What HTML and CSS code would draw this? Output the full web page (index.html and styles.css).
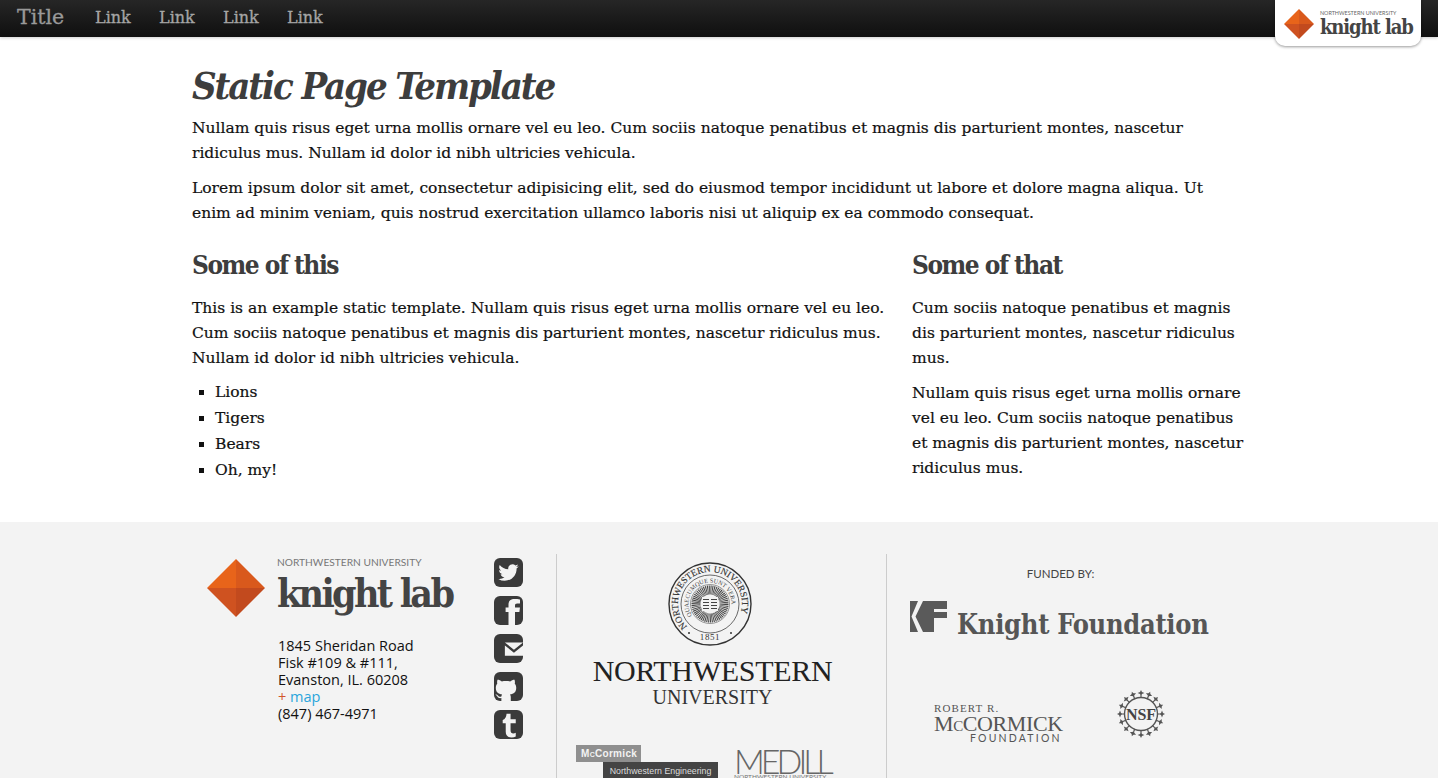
FILE: index.html
```html
<!DOCTYPE html>
<html lang="en">
<head>
  <meta charset="UTF-8">
  <meta name="viewport" content="width=device-width, initial-scale=1.0">
  <title>Static Page Template</title>
  <link rel="stylesheet" href="styles.css">
</head>
<body>
  <header class="topbar">
    <a class="brand" href="#">Title</a>
    <nav class="nav">
      <a href="#">Link</a>
      <a href="#">Link</a>
      <a href="#">Link</a>
      <a href="#">Link</a>
    </nav>
    <a class="badge" href="#">
      <svg class="diamond-sm" viewBox="0 0 58 58"><use href="#diamond"/></svg>
      <span class="badge-text">
        <span class="badge-nu">NORTHWESTERN UNIVERSITY</span>
        <span class="badge-kl">knight lab</span>
      </span>
    </a>
  </header>

  <main class="container">
    <h1>Static Page Template</h1>
    <p class="intro">Nullam quis risus eget urna mollis ornare vel eu leo. Cum sociis natoque penatibus et magnis dis parturient montes, nascetur ridiculus mus. Nullam id dolor id nibh ultricies vehicula.</p>
    <p class="intro">Lorem ipsum dolor sit amet, consectetur adipisicing elit, sed do eiusmod tempor incididunt ut labore et dolore magna aliqua. Ut enim ad minim veniam, quis nostrud exercitation ullamco laboris nisi ut aliquip ex ea commodo consequat.</p>
    <div class="columns">
      <section>
        <h2>Some of this</h2>
        <p>This is an example static template. Nullam quis risus eget urna mollis ornare vel eu leo. Cum sociis natoque penatibus et magnis dis parturient montes, nascetur ridiculus mus. Nullam id dolor id nibh ultricies vehicula.</p>
        <ul>
          <li>Lions</li>
          <li>Tigers</li>
          <li>Bears</li>
          <li>Oh, my!</li>
        </ul>
      </section>
      <section>
        <h2>Some of that</h2>
        <p>Cum sociis natoque penatibus et magnis dis parturient montes, nascetur ridiculus mus.</p>
        <p>Nullam quis risus eget urna mollis ornare vel eu leo. Cum sociis natoque penatibus et magnis dis parturient montes, nascetur ridiculus mus.</p>
      </section>
    </div>
  </main>

  <footer class="footer">
    <div class="footer-inner">
      <div class="f-lab">
        <div class="lab-info">
          <div class="lab-logo">
            <svg class="diamond-lg" viewBox="0 0 58 58">
              <defs>
                <g id="diamond">
                  <polygon points="29,0 58,29 29,29" fill="#d9591c"/>
                  <polygon points="29,0 0,29 29,29" fill="#e8641a"/>
                  <polygon points="0,29 29,58 29,29" fill="#cf5220"/>
                  <polygon points="58,29 29,58 29,29" fill="#c24a1e"/>
                </g>
              </defs>
              <use href="#diamond"/>
            </svg>
            <div class="lab-name">
              <span class="lab-nu">NORTHWESTERN UNIVERSITY</span>
              <span class="lab-kl">knight lab</span>
            </div>
          </div>
          <address class="address">
            1845 Sheridan Road<br>
            Fisk #109 &amp; #111,<br>
            Evanston, IL. 60208<br>
            <span class="plus">+</span> <a href="#">map</a><br>
            (847) 467-4971
          </address>
        </div>
        <div class="social">
          <a href="#" aria-label="Twitter"><svg viewBox="0 0 24 24"><path transform="translate(3.6 3.6) scale(.7)" d="M23.953 4.57a10 10 0 01-2.825.775 4.958 4.958 0 002.163-2.723c-.951.555-2.005.959-3.127 1.184a4.92 4.92 0 00-8.384 4.482C7.69 8.095 4.067 6.13 1.64 3.162a4.822 4.822 0 00-.666 2.475c0 1.71.87 3.213 2.188 4.096a4.904 4.904 0 01-2.228-.616v.06a4.923 4.923 0 003.946 4.827 4.996 4.996 0 01-2.212.085 4.936 4.936 0 004.604 3.417 9.867 9.867 0 01-6.102 2.105c-.39 0-.779-.023-1.17-.067a13.995 13.995 0 007.557 2.209c9.053 0 13.998-7.496 13.998-13.985 0-.21 0-.42-.015-.63A9.935 9.935 0 0024 4.59z"/></svg></a>
          <a href="#" aria-label="Facebook"><svg viewBox="0 0 24 24"><path d="M12 24V13.300H9.600V9.500H12V7C12 3.900 14 2.500 17 2.500c1.500 0 3 .1 4.500.3v3.500h-2.300c-1.400 0-1.800.6-1.800 1.700v1.500H21.500l-.5 3.800h-3.600V24z"/></svg></a>
          <a href="#" aria-label="Email"><svg viewBox="0 0 24 24"><path d="M9 7H24L16.500 13zM9 9.500l7.500 6 7.500-6V18H9z"/></svg></a>
          <a href="#" aria-label="GitHub"><svg viewBox="0 0 24 24"><path d="M6.100 24v-2.400c-1.700.3-2.700-.3-3.300-1.300-.4-.8-.9-1.200-1.600-1.500.6-.3 1.600 0 2.200.9.6.9 1.500 1.100 2.700.6.100-.7.300-1.200.7-1.600-3.400-.4-5.300-2-5.300-5.600 0-1.400.4-2.500 1.200-3.400-.2-.9-.2-2 .2-3.200 1.100-.1 2.300.4 3.600 1.300 1.700-.4 5.200-.4 6.900 0 1.300-.9 2.500-1.400 3.600-1.300.4 1.200.4 2.300.2 3.200.8.900 1.200 2 1.200 3.400 0 3.600-1.900 5.200-5.300 5.600.5.500.8 1.200.8 2.300V24z"/></svg></a>
          <a href="#" aria-label="Tumblr"><svg viewBox="0 0 24 24"><path d="M10.400 3h3.300v4.600h4.300v3.400h-4.300v5.700c0 1.800.8 2.700 2.300 2.700.7 0 1.400-.2 2-.6V22c-.9.5-2.100.8-3.400.8-3 0-4.900-1.700-4.900-4.800V11H7.200V8.300C9.200 7.600 10.200 5.600 10.400 3z"/></svg></a>
        </div>
      </div>

      <div class="f-nu">
        <svg class="seal" viewBox="0 0 84 84">
          <defs>
            <path id="seal-ring" d="M42 42m-32 0a32 32 0 1 1 64 0a32 32 0 1 1-64 0"/>
            <path id="seal-inner" d="M42 42m-21.500 0a21.500 21.500 0 1 1 43 0a21.500 21.500 0 1 1-43 0"/>
          </defs>
          <circle cx="42" cy="42" r="41" fill="none" stroke="#333" stroke-width="1.400"/>
          <circle cx="42" cy="42" r="29" fill="none" stroke="#444" stroke-width=".8"/>
          <circle cx="42" cy="42" r="19.500" fill="none" stroke="#555" stroke-width=".6"/>
          <circle cx="42" cy="42" r="14" fill="none" stroke="#444" stroke-width="9" stroke-dasharray=".9 .6"/>
          <rect x="34" y="35" width="16" height="14" fill="#f3f3f3"/>
          <path d="M35 37.500h6M43 37.500h6M35 40.500h6M43 40.500h6M35 43.500h6M43 43.500h6M35 46.500h6M43 46.500h6" stroke="#444" stroke-width="1.200"/>
          <text class="seal-text" transform="rotate(-45 42 42)"><textPath href="#seal-ring">NORTHWESTERN UNIVERSITY</textPath></text>
          <text class="seal-small" transform="rotate(-33 42 42)"><textPath href="#seal-inner">QUAECUMQUE SUNT VERA</textPath></text>
          <text class="seal-year" x="42" y="78" text-anchor="middle">1851</text>
          <circle cx="21" cy="71" r="1" fill="#333"/>
          <circle cx="63" cy="71" r="1" fill="#333"/>
        </svg>
        <div class="nu-name">NORTHWESTERN</div>
        <div class="nu-sub">UNIVERSITY</div>
        <div class="schools">
          <div class="mccormick">
            <span class="mc-top">M<small>C</small>Cormick</span>
            <span class="mc-bottom">Northwestern Engineering</span>
          </div>
          <div class="medill">
            <span class="medill-name">MEDILL</span>
            <span class="medill-sub">NORTHWESTERN UNIVERSITY</span>
          </div>
        </div>
      </div>

      <div class="f-funders">
        <div class="funded">FUNDED BY:</div>
        <div class="kf">
          <svg class="kf-mark" viewBox="0 0 38 31"><path d="M0 0H8L1.500 15.500 8 31H0ZM13 0H37V8H24V11H37V17H24V31H13L5.500 15.500Z"/></svg>
          <span class="kf-name">Knight Foundation</span>
        </div>
        <div class="funder-row">
          <div class="rrm">
            <span class="rrm-a">ROBERT R.</span>
            <span class="rrm-b">M<small>C</small>CORMICK</span>
            <span class="rrm-c">FOUNDATION</span>
          </div>
          <svg class="nsf" viewBox="0 0 48 48">
            <defs>
              <path id="nsf-star" d="M24 0l1 2 2.400 1-2.400 1-1 2.200-1-2.200-2.400-1 2.400-1zM23.400 5h1.200v3h-1.200z"/>
            </defs>
            <circle cx="24" cy="24" r="16.500" fill="none" stroke="#555" stroke-width="1.400"/>
            <use href="#nsf-star"/>
            <use href="#nsf-star" transform="rotate(22.5 24 24)"/>
            <use href="#nsf-star" transform="rotate(45 24 24)"/>
            <use href="#nsf-star" transform="rotate(67.5 24 24)"/>
            <use href="#nsf-star" transform="rotate(90 24 24)"/>
            <use href="#nsf-star" transform="rotate(112.5 24 24)"/>
            <use href="#nsf-star" transform="rotate(135 24 24)"/>
            <use href="#nsf-star" transform="rotate(157.5 24 24)"/>
            <use href="#nsf-star" transform="rotate(180 24 24)"/>
            <use href="#nsf-star" transform="rotate(202.5 24 24)"/>
            <use href="#nsf-star" transform="rotate(225 24 24)"/>
            <use href="#nsf-star" transform="rotate(247.5 24 24)"/>
            <use href="#nsf-star" transform="rotate(270 24 24)"/>
            <use href="#nsf-star" transform="rotate(292.5 24 24)"/>
            <use href="#nsf-star" transform="rotate(315 24 24)"/>
            <use href="#nsf-star" transform="rotate(337.5 24 24)"/>
            <text x="24" y="29.500" text-anchor="middle" class="nsf-text">NSF</text>
          </svg>
        </div>
      </div>
    </div>
  </footer>
</body>
</html>
```

FILE: styles.css
```css
* { box-sizing: border-box; }
body {
  margin: 0;
  background: #fff;
  color: #111;
  font-family: "DejaVu Serif", serif;
  font-size: 15.5px;
  line-height: 25px;
}
a { text-decoration: none; }

.topbar {
  position: relative;
  display: flex;
  align-items: center;
  height: 37px;
  padding: 0 0 3px 17px;
  background: linear-gradient(#262626, #0f0f0f);
  box-shadow: 0 1px 3px rgba(0,0,0,.2);
}
.brand {
  width: 78px;
  color: #999;
  font-size: 20.5px;
  -webkit-text-stroke: .3px #999;
}
.nav { display: flex; gap: 26px; }
.nav a {
  width: 38px;
  color: #a5a5a5;
  font-size: 16px;
  -webkit-text-stroke: .3px #a5a5a5;
}
.badge {
  position: absolute;
  top: 0;
  left: 1275px;
  display: flex;
  gap: 6px;
  align-items: center;
  width: 146px;
  height: 46px;
  padding: 2px 0 0 9px;
  background: #fff;
  border-radius: 0 0 10px 10px;
  box-shadow: 0 1px 3px rgba(0,0,0,.4);
}
.diamond-sm { width: 30px; height: 30px; }
.badge-text { display: flex; flex-direction: column; white-space: nowrap; }
.badge-nu {
  color: #666;
  font: 5.400px/7px "Lato", sans-serif;
}
.badge-kl {
  color: #444;
  font: bold 20px/21px "DejaVu Serif Condensed", "DejaVu Serif", serif;
  font-stretch: condensed;
  letter-spacing: -1.100px;
}

.container {
  width: 1054px;
  height: 485px;
  margin: 0 auto;
  padding-top: 23px;
}
h1, h2 {
  margin: 0;
  color: #3d3d3d;
  font-family: "DejaVu Serif Condensed", "DejaVu Serif", serif;
  font-stretch: condensed;
  font-weight: bold;
}
h1 {
  font-size: 38px;
  font-style: italic;
  line-height: 52px;
  letter-spacing: -2.100px;
  margin-bottom: 4px;
}
h2 {
  font-size: 26px;
  line-height: 40px;
  letter-spacing: -1.500px;
  margin-bottom: 11px;
}
p {
  margin: 0 0 10px;
  -webkit-text-stroke: .2px #111;
}
.intro { max-width: 1030px; }
.columns {
  display: grid;
  grid-template-columns: 700px 334px;
  column-gap: 20px;
  margin-top: 19px;
}
ul {
  margin: -2px 0 0;
  padding-left: 23px;
  list-style: square;
  -webkit-text-stroke: .2px #111;
}
li { line-height: 26px; }

.footer {
  height: 256px;
  overflow: hidden;
  background: #f3f3f3;
}
.footer-inner {
  display: grid;
  grid-template-columns: 364px 330px 360px;
  width: 1054px;
  height: 100%;
  margin: 0 auto;
  padding-top: 32px;
}
.f-lab {
  display: flex;
  justify-content: space-between;
  padding: 4px 33px 0 15px;
}
.lab-logo { display: flex; gap: 12px; }
.diamond-lg { width: 58px; height: 58px; margin-top: 1px; }
.lab-name { display: flex; flex-direction: column; }
.lab-nu {
  color: #777;
  font: 10.200px/12px "Lato", sans-serif;
  margin-top: -2px;
}
.lab-kl {
  margin-top: 3px;
  color: #444;
  font: bold 39px/44px "DejaVu Serif Condensed", "DejaVu Serif", serif;
  font-stretch: condensed;
  letter-spacing: -2.700px;
}
.address {
  margin: 20px 0 0 71px;
  color: #111;
  font: normal 14.500px/17px "Open Sans", sans-serif;
}
.plus { color: #d2552a; }
.address a { color: #2aa5dc; }
.social { display: flex; flex-direction: column; gap: 9px; }
.social a {
  display: block;
  width: 29px;
  height: 29px;
  overflow: hidden;
  background: #3a3a3a;
  border-radius: 6px;
}
.social svg { display: block; width: 29px; height: 29px; fill: #f3f3f3; }

.f-nu {
  border-left: 1px solid #ccc;
  padding: 8px 18px 0 0;
  text-align: center;
}
.seal { display: block; width: 84px; height: 84px; margin-left: 111px; }
.seal-text { font: 9.400px "Liberation Serif", serif; fill: #333; stroke: #333; stroke-width: .15px; }
.seal-small { font: 6.200px "Liberation Serif", serif; fill: #444; }
.seal-year { font: 9px "Liberation Serif", serif; fill: #333; letter-spacing: .6px; }
.nu-name {
  margin-top: 9px;
  color: #222;
  font: 30px/31px "Liberation Serif", serif;
  letter-spacing: -.3px;
}
.nu-sub {
  color: #333;
  font: 20px/22px "Liberation Serif", serif;
}
.schools {
  display: flex;
  gap: 16px;
  margin: 37px 0 0 19px;
  text-align: left;
}
.mccormick { display: flex; flex-direction: column; width: 142px; font-family: "Liberation Sans", sans-serif; }
.mc-top {
  width: 65px;
  height: 17px;
  padding-left: 5px;
  background: #8f8f8f;
  color: #f3f3f3;
  font-size: 10px;
  font-weight: bold;
  line-height: 17px;
  letter-spacing: .3px;
}
.mc-top small { font-size: 7px; }
.mc-bottom {
  align-self: flex-end;
  width: 115px;
  height: 18px;
  background: #444;
  color: #ddd;
  font-size: 8.800px;
  line-height: 18px;
  text-align: center;
}
.medill { display: flex; flex-direction: column; margin-top: 3px; }
.medill-name {
  color: #666;
  font: 300 34px/25px "Lato", sans-serif;
  letter-spacing: -4px;
}
.medill-sub { color: #777; font: 6.500px/8px "Lato", sans-serif; white-space: nowrap; }

.f-funders { border-left: 1px solid #ccc; }
.funded {
  width: 347px;
  margin-top: 12px;
  color: #444;
  font: 11.500px/16px "Lato", sans-serif;
  text-align: center;
}
.kf {
  display: flex;
  gap: 9px;
  align-items: flex-start;
  margin: 19px 0 0 23px;
}
.kf-mark { width: 38px; height: 31px; fill: #5a5a5a; }
.kf-name {
  margin-top: 6px;
  color: #565656;
  font: bold 27px/36px "DejaVu Serif Condensed", "DejaVu Serif", serif;
  font-stretch: condensed;
  letter-spacing: -.3px;
}
.funder-row {
  display: flex;
  align-items: flex-start;
  margin: 50px 0 0 47px;
}
.rrm {
  display: flex;
  flex-direction: column;
  width: 183px;
  margin-top: 10px;
  color: #555;
  font-family: "Liberation Serif", serif;
}
.rrm-a { margin-bottom: 2px; font-size: 11px; line-height: 10px; letter-spacing: 1.100px; }
.rrm-b { margin-bottom: -2px; font-size: 22px; line-height: 18px; letter-spacing: -.4px; }
.rrm-b small { font-size: 15px; }
.rrm-c {
  margin-left: 36px;
  font: 10.500px/11px "Lato", sans-serif;
  letter-spacing: 2.200px;
}
.nsf { width: 48px; height: 48px; margin-top: -3px; fill: #555; }
.nsf-text { font: bold 16px "Liberation Serif", serif; fill: #444; }
```
